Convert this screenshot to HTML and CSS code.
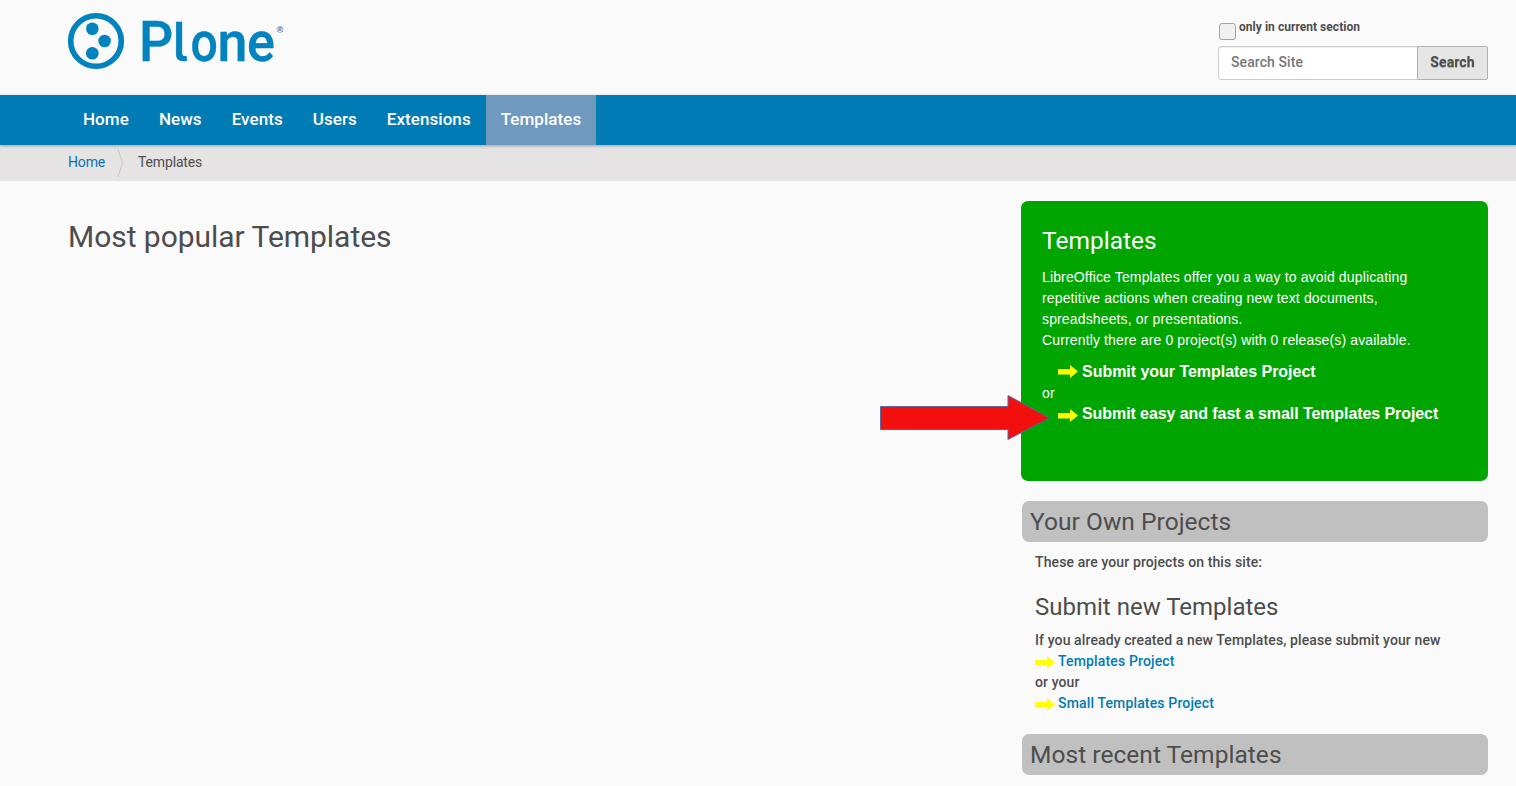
FILE: index.html
```html
<!DOCTYPE html>
<html lang="en">
<head>
<meta charset="utf-8">
<title>Templates</title>
<link rel="stylesheet" href="styles.css">
</head>
<body>
<svg class="defs" width="0" height="0" aria-hidden="true">
  <symbol id="arrow" viewBox="0 0 20 13"><path d="M0 4H12V0L20 6.500L12 13V9.500H0Z" fill="#ff0"/></symbol>
</svg>
<header class="header">
  <svg class="logo" width="220" height="60" viewBox="0 0 220 60" role="img" aria-label="Plone">
    <circle cx="28" cy="28" r="25.3" fill="none" stroke="#0083be" stroke-width="5.6"/>
    <circle cx="24.3" cy="15.8" r="6.3"/><circle cx="36.6" cy="28" r="6.3"/><circle cx="24.3" cy="40.2" r="6.3"/>
    <g class="wordmark">
      <text transform="translate(71 48) scale(.96 1)">P</text>
      <text class="tailed" transform="translate(104.300 48)">l</text>
      <text transform="translate(122.500 47.500) scale(.86 .98)">o</text>
      <text transform="translate(149.500 48) scale(.96 1)">n</text>
      <text transform="translate(179 47.500) scale(.93 .98)">e</text>
    </g>
    <text class="mark" x="208.5" y="20">®</text>
  </svg>
  <form class="search">
    <label class="section"><span class="check"></span>only in current section</label>
    <div class="search-row">
      <input class="field" type="text" placeholder="Search Site"><button class="submit" type="button">Search</button>
    </div>
  </form>
</header>
<nav class="nav">
  <a>Home</a><a>News</a><a>Events</a><a>Users</a><a>Extensions</a><a class="active">Templates</a>
</nav>
<div class="crumbs">
  <a>Home</a>
  <svg width="7" height="28" viewBox="0 0 7 28"><path d="M1 0L5.5 14L1 28" fill="none" stroke="#c6c4c5"/></svg>
  <span>Templates</span>
</div>
<div class="content">
  <main class="main">
    <h1>Most popular Templates</h1>
  </main>
  <aside class="side">
    <section class="promo">
      <h2>Templates</h2>
      <p>LibreOffice Templates offer you a way to avoid duplicating<br>repetitive actions when creating new text documents,<br>spreadsheets, or presentations.<br>Currently there are 0 project(s) with 0 release(s) available.</p>
      <a class="promo-link"><svg width="20" height="13"><use href="#arrow"/></svg>Submit your Templates Project</a>
      <p class="or">or</p>
      <a class="promo-link easy"><svg width="20" height="13"><use href="#arrow"/></svg>Submit easy and fast a small Templates Project</a>
      <svg class="pointer" width="172" height="48" viewBox="0 0 172 48"><path d="M.5 11.500H128V.5L169.500 23L128 44.500V34.500H.5Z" fill="#f40f0f" stroke="#596aa0"/></svg>
    </section>
    <h2 class="bar">Your Own Projects</h2>
    <div class="block own">
      <p class="note">These are your projects on this site:</p>
      <h2 class="sub">Submit new Templates</h2>
      <p>If you already created a new Templates, please submit your new</p>
      <a class="link"><svg width="20" height="13"><use href="#arrow"/></svg>Templates Project</a>
      <p>or your</p>
      <a class="link"><svg width="20" height="13"><use href="#arrow"/></svg>Small Templates Project</a>
    </div>
    <h2 class="bar">Most recent Templates</h2>
  </aside>
</div>
</body>
</html>
```
FILE: styles.css
```css
* { box-sizing: border-box; }
body {
  margin: 0;
  height: 786px;
  overflow: hidden;
  background: #fafafa;
  color: #4d4d4d;
  font: 14px/21px Roboto, sans-serif;
}
h1, h2, p { margin: 0; }
h1, h2 { font-weight: 400; }
svg { display: block; flex: none; }
.defs { position: absolute; }
.header {
  display: flex;
  justify-content: space-between;
  height: 95px;
  padding: 13px 28px 0 68px;
}
.logo { fill: #0083be; overflow: visible; }
.wordmark { font: 500 56px Roboto, sans-serif; stroke: #0083be; stroke-width: .4; }
.tailed { font: 500 54px Inter, sans-serif; font-feature-settings: "cv05"; }
.mark { font: 700 9px "Liberation Sans", sans-serif; }
.search { width: 270px; padding-top: 4px; }
.section {
  display: flex;
  height: 29px;
  font-size: 12px;
  font-weight: 700;
  letter-spacing: .04px;
}
.check {
  width: 17px;
  height: 17px;
  margin: 6px 3px 0 1px;
  border: 1px solid #a3a4a8;
  border-radius: 3px;
  background: #eff0f2;
}
.search-row { display: flex; height: 34px; }
.field {
  width: 199px;
  padding: 0 12px 2px;
  border: 1px solid #ccc;
  border-right: 0;
  border-radius: 4px 0 0 4px;
  background: #fff;
  font: 500 14px Roboto, sans-serif;
  letter-spacing: .08px;
  box-shadow: inset 0 1px 1px rgba(0, 0, 0, .075);
}
.field::placeholder { color: #777; }
.submit {
  width: 71px;
  padding: 0 0 2px;
  border: 1px solid #b0b0b0;
  border-radius: 0 2px 2px 0;
  background: #e5e5e5;
  color: #4d4d4d;
  font: 700 14px Roboto, sans-serif;
  letter-spacing: .1px;
  text-shadow: 0 1px 0 rgba(77, 77, 77, .35);
}
.nav {
  position: relative;
  display: flex;
  height: 50px;
  padding-left: 68px;
  background: #007bb3;
  box-shadow: 0 1px 3px rgba(0, 0, 0, .3);
}
.nav a {
  padding: 0 15px;
  color: #fff;
  font-size: 17px;
  font-weight: 500;
  letter-spacing: .06px;
  line-height: 49px;
}
.nav .active { background: #7099bf; }
.crumbs {
  display: flex;
  height: 36px;
  padding: 4px 0 0 68px;
  background: #e5e3e4;
  letter-spacing: -.16px;
  line-height: 27px;
}
.crumbs a { color: #0a71ad; }
.crumbs svg { margin: 0 14px 0 12px; }
.content {
  display: flex;
  justify-content: space-between;
  padding: 20px 28px 0 68px;
}
.main { padding-top: 19px; }
h1 { font-size: 30px; line-height: 33px; letter-spacing: -.04px; }
h2 { font-size: 24.5px; line-height: 26px; }
.side { width: 467px; }
.promo {
  position: relative;
  height: 280px;
  padding: 27px 21px 0;
  border-radius: 7px;
  background: #00a500;
  color: #fff;
  font-family: "Liberation Sans", Arial, sans-serif;
  letter-spacing: .14px;
}
.promo h2 { margin-bottom: 13px; font-family: Roboto, sans-serif; letter-spacing: 0; }
.promo-link {
  display: flex;
  gap: 4px;
  align-items: center;
  height: 21px;
  padding-left: 16px;
  font-size: 16px;
  font-weight: 700;
  letter-spacing: -.03px;
}
.promo p + .promo-link { margin-top: 10px; }
.promo .or { margin-top: 1px; }
.promo .or + .promo-link { margin-top: -1px; letter-spacing: -.08px; }
.easy svg { margin-top: 3px; }
.pointer { position: absolute; left: -141px; top: 194px; }
.bar {
  height: 41px;
  margin: 20px 0 0 1px;
  padding-left: 8px;
  border-radius: 7px;
  background: #c0c0c0;
  letter-spacing: .04px;
  line-height: 42px;
}
.block {
  height: 192px;
  margin-bottom: -20px;
  padding: 10px 0 0 14px;
  font-weight: 500;
}
.block p { letter-spacing: .11px; }
.block + .bar { margin-top: 20px; }
.sub { margin: 21px 0 10px; font-size: 24px; }
.link { display: flex; gap: 3px; align-items: center; color: #007bb3; letter-spacing: .15px; }
.link svg { margin-top: 1px; }
```
